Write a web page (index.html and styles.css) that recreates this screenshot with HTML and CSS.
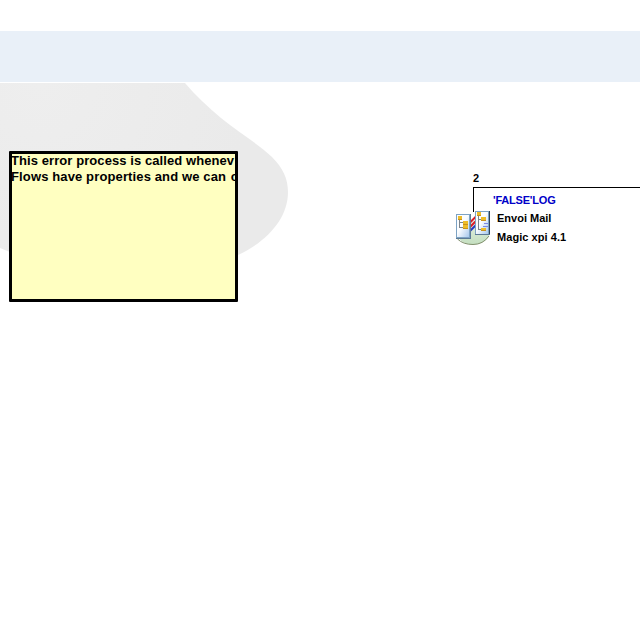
FILE: index.html
```
<!DOCTYPE html>
<html lang="en">
<head>
<meta charset="utf-8">
<title>Flow canvas</title>
<link rel="stylesheet" href="styles.css">
</head>
<body>
<header class="band"></header>
<main class="canvas">
  <svg class="backdrop" width="300" height="190" viewBox="0 83 300 190">
    <defs>
      <radialGradient id="shade" gradientUnits="userSpaceOnUse" cx="40" cy="83" r="210">
        <stop offset="0" stop-color="#eeeeee"/>
        <stop offset="1" stop-color="#eaeaea"/>
      </radialGradient>
    </defs>
    <path fill="url(#shade)" d="M0 83H185C196 96 208 107 221 118C238 132 257 143 272 157C283 168 288 179 288 192C288 218 268 241 238 255C170 281 70 278 0 248Z"/>
  </svg>
  <section class="note">
    <p class="line first">This error process is called whenev</p>
    <p class="line second">Flows have properties and we can <span class="last">c</span></p>
  </section>
  <section class="step">
    <svg class="icon" width="200" height="65" viewBox="450 183 200 65" shape-rendering="crispEdges">
      <defs>
        <linearGradient id="page" x1="0" y1="0" x2="1" y2="1">
          <stop offset=".45" stop-color="#fbfdff"/>
          <stop offset="1" stop-color="#a4c6ec"/>
        </linearGradient>
        <linearGradient id="base" x1="0" y1="0" x2="0" y2="1">
          <stop offset="0" stop-color="#e2efe2"/>
          <stop offset="1" stop-color="#c4dfc0"/>
        </linearGradient>
      </defs>
      <path d="M473.500 212V187.500H650" fill="none" stroke="#000"/>
      <g shape-rendering="auto">
        <ellipse cx="473" cy="232.500" rx="16.500" ry="12" fill="url(#base)"/>
        <path d="M457.500 239Q463 244.500 473 244.500T489 236" fill="none" stroke="#82906e"/>
        <path d="M470 222.500L476.500 216M470 227L476.500 220.500" stroke="#dc1c28" stroke-width="2"/>
        <path d="M470 231L476.500 224.500" stroke="#2838c0" stroke-width="2"/>
      </g>
      <rect x="456.500" y="214.500" width="13" height="23" fill="url(#page)" stroke="#7da3c4"/>
      <path d="M470.500 214V238.500H456" fill="none" stroke="#5d7a96"/>
      <path d="M459.500 218V227.500H464M459.500 222.500H464" fill="none" stroke="#7c848c"/>
      <path d="M458 216h4v4h-4zM463 221h5v4h-5zM463 225h5v4h-5z" fill="#edbc28"/>
      <path d="M458 219.500h4M463 224.500h5M463 228.500h5" stroke="#c8921c" fill="none"/>
      <rect x="475.500" y="211.500" width="13" height="23" fill="url(#page)" stroke="#7da3c4"/>
      <path d="M489.500 211V235" fill="none" stroke="#2f4054"/>
      <path d="M475 234.500H490" fill="none" stroke="#5d7a96"/>
      <path d="M478.500 215V229.500H482M478.500 219.500H482" fill="none" stroke="#7c848c"/>
      <path d="M484 223.500h4M483 226.500h5" stroke="#7a88e4" fill="none"/>
      <path d="M477 212h4v4h-4zM481 217h5v4h-5zM481 228h5v3h-5z" fill="#edbc28"/>
      <path d="M477 215.500h4M481 220.500h5M481 230.500h5" stroke="#c8921c" fill="none"/>
    </svg>
    <span class="label number">2</span>
    <span class="label condition">'FALSE'LOG</span>
    <span class="label name">Envoi Mail</span>
    <span class="label system">Magic xpi 4.1</span>
  </section>
</main>
</body>
</html>
```
FILE: styles.css
```
body {
  margin: 0;
  padding-top: 31px;
  height: 609px;
  overflow: hidden;
  background: #fff;
  color: #000;
  font-family: "Liberation Sans", Arial, sans-serif;
  font-weight: bold;
}
.band {
  height: 51px;
  background: #e9f0f8;
}
.canvas {
  position: relative;
  height: 558px;
  overflow: hidden;
}
.backdrop {
  position: absolute;
  left: 0;
  top: 1px;
}
.note {
  position: absolute;
  left: 9px;
  top: 69px;
  box-sizing: border-box;
  width: 229px;
  height: 151px;
  border: 3px solid #000;
  border-radius: 1px;
  background: #ffffc1;
  overflow: hidden;
}
.line {
  margin: 0 0 0 -1px;
  white-space: nowrap;
  font-size: 13px;
  line-height: 16px;
}
.first {
  margin-top: -1px;
  letter-spacing: 0.08px;
}
.second {
  letter-spacing: 0.13px;
}
.last {
  margin-left: 1px;
}
.step {
  position: absolute;
  left: 450px;
  top: 83px;
  width: 190px;
  height: 90px;
}
.icon {
  position: absolute;
  left: 0;
  top: 18px;
}
.label {
  position: absolute;
  white-space: nowrap;
  font-size: 11px;
  line-height: 14px;
}
.number {
  left: 23px;
  top: 6px;
}
.condition {
  left: 43px;
  top: 28px;
  color: #0000c8;
  letter-spacing: -0.2px;
}
.name {
  left: 47px;
  top: 46px;
}
.system {
  left: 47px;
  top: 65px;
  letter-spacing: 0.06px;
}
```
